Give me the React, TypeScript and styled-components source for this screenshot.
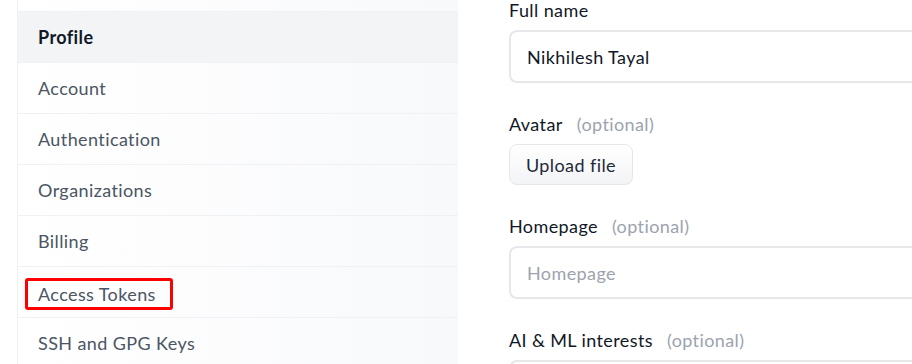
import React from "react";
import styled, { createGlobalStyle } from "styled-components";

const Global = createGlobalStyle`
  html, body { margin: 0; padding: 0; background: #ffffff; }
  body {
    width: 912px;
    height: 364px;
    overflow: hidden;
    font-family: "Lato", "Noto Sans", sans-serif;
    letter-spacing: 0.4px;
    -webkit-font-smoothing: antialiased;
  }
  * { box-sizing: border-box; }
`;

const Page = styled.div`
  display: flex;
  align-items: flex-start;
  padding-left: 17px;
  height: 364px;
  overflow: hidden;
`;

const Sidebar = styled.nav`
  flex: 0 0 441px;
  height: 364px;
  border-left: 1px solid #eef0f3;
  background: linear-gradient(to right, #ffffff, #f8f9fb);
  padding-top: 11px;
  display: flex;
  flex-direction: column;
`;

const NavItem = styled.a<{ $active?: boolean }>`
  display: flex;
  align-items: center;
  flex: 0 0 51px;
  height: 51px;
  padding-left: 20px;
  border-top: 1px solid #eff1f4;
  background: ${(p) => (p.$active ? "#f3f4f6" : "transparent")};
  color: ${(p) => (p.$active ? "#111827" : "#4b5563")};
  font-weight: ${(p) => (p.$active ? 700 : 400)};
  font-size: 18px;
  text-decoration: none;
`;

const Highlight = styled.span`
  display: inline-block;
  margin-left: -13px;
  margin-top: 4px;
  padding: 0 14px 0 10px;
  height: 32px;
  line-height: 26px;
  border: 3px solid #ff0000;
  border-radius: 3px;
`;

const Main = styled.main`
  flex: 0 0 auto;
  width: 460px;
  padding-left: 51px;
  margin-top: -2px;
  display: flex;
  flex-direction: column;
`;

const Field = styled.div`
  display: flex;
  flex-direction: column;
  align-items: flex-start;
  gap: 8px;
  margin-bottom: 29px;
`;

const Label = styled.label`
  font-size: 18px;
  line-height: 24px;
  color: #111827;
  display: flex;
  gap: 14px;
`;

const Optional = styled.span`
  color: #9ca3af;
`;

const Input = styled.input`
  width: 420px;
  height: 53px;
  border: 2px solid #e5e7eb;
  border-radius: 8px;
  padding: 0 16px;
  font-family: inherit;
  letter-spacing: inherit;
  font-size: 18px;
  color: #111827;
  background: #ffffff;
  outline: none;
  &::placeholder { color: #9ca3af; }
`;

const Button = styled.button`
  height: 41px;
  padding: 0 16px;
  border: 1px solid #e5e7eb;
  border-radius: 8px;
  background: linear-gradient(to bottom, #ffffff, #f3f4f6);
  font-family: inherit;
  letter-spacing: inherit;
  font-size: 18px;
  color: #1f2937;
`;

const navItems = [
  "Profile",
  "Account",
  "Authentication",
  "Organizations",
  "Billing",
  "Access Tokens",
  "SSH and GPG Keys",
];

export default function App() {
  return (
    <>
      <Global />
      <Page>
        <Sidebar>
          {navItems.map((item) => (
            <NavItem key={item} href="#" $active={item === "Profile"}>
              {item === "Access Tokens" ? <Highlight>{item}</Highlight> : item}
            </NavItem>
          ))}
        </Sidebar>
        <Main>
          <Field>
            <Label>Full name</Label>
            <Input defaultValue="Nikhilesh Tayal" />
          </Field>
          <Field>
            <Label>
              Avatar<Optional>(optional)</Optional>
            </Label>
            <Button>Upload file</Button>
          </Field>
          <Field>
            <Label>
              Homepage<Optional>(optional)</Optional>
            </Label>
            <Input placeholder="Homepage" />
          </Field>
          <Field>
            <Label>
              AI &amp; ML interests<Optional>(optional)</Optional>
            </Label>
            <Input />
          </Field>
        </Main>
      </Page>
    </>
  );
}
